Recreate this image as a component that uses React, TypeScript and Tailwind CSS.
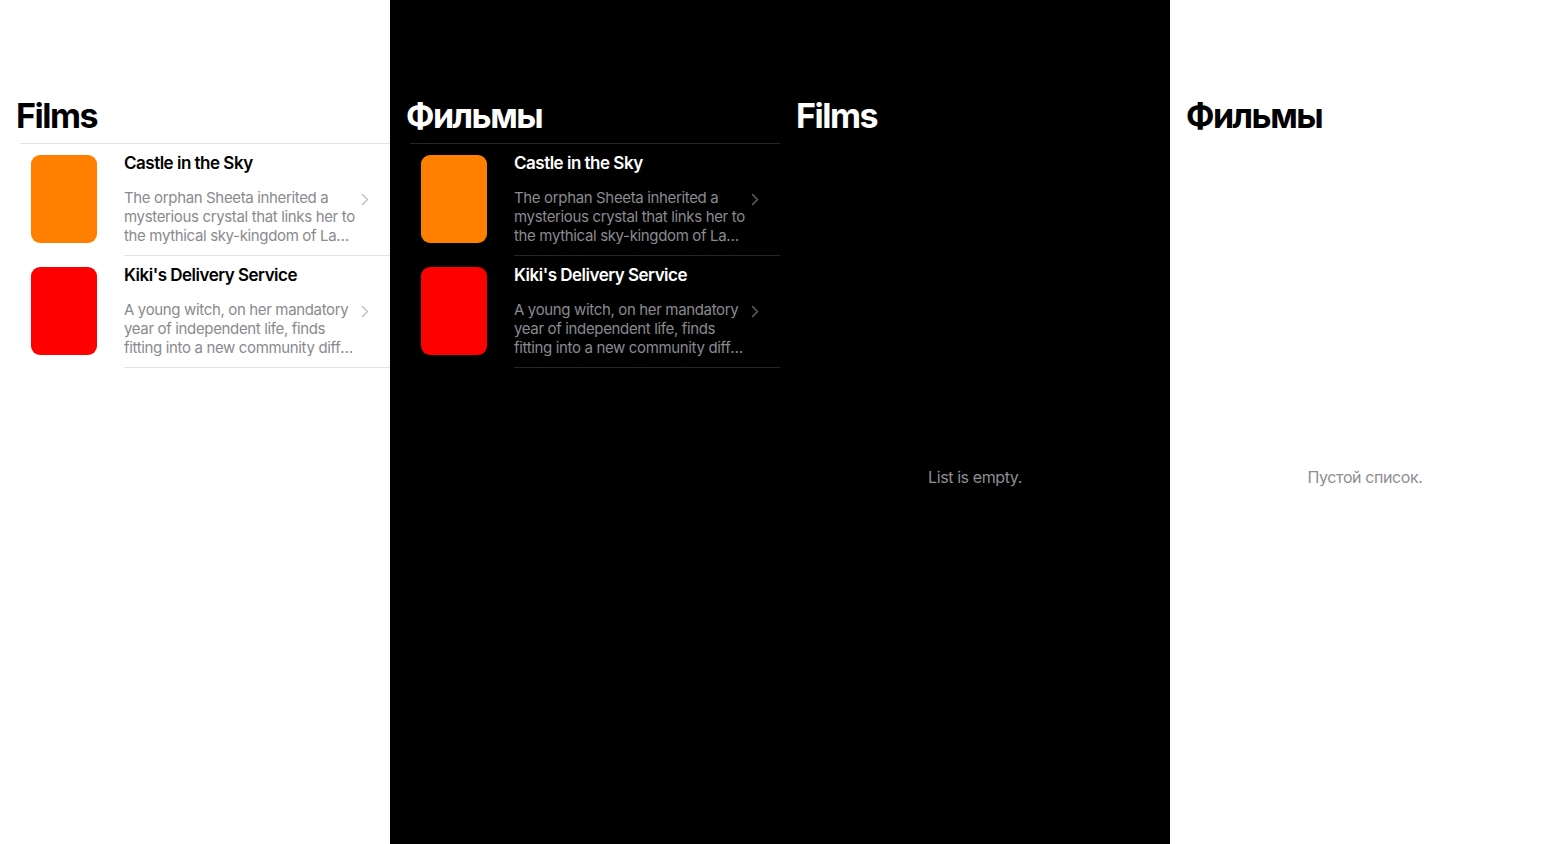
import React from "react";

type Film = { id: string; title: string; lines: string[]; color: string };

// Description split the way the list wraps it; the last line is cut with an ellipsis.
const films: Film[] = [
  {
    id: "castle",
    title: "Castle in the Sky",
    lines: [
      "The orphan Sheeta inherited a",
      "mysterious crystal that links her to",
      "the mythical sky-kingdom of Laputa. With the help of resourceful Pazu and a rollicking band of sky pirates, she makes her way to the ruins of the once-great civilization.",
    ],
    color: "bg-[#ff8000]",
  },
  {
    id: "kiki",
    title: "Kiki's Delivery Service",
    lines: [
      "A young witch, on her mandatory",
      "year of independent life, finds",
      "fitting into a new community difficult while she supports herself by running an air courier service.",
    ],
    color: "bg-[#ff0000]",
  },
];

function Chevron({ dark }: { dark: boolean }) {
  return (
    <svg width="8" height="13" viewBox="0 0 8 13" fill="none" aria-hidden className="shrink-0">
      <path
        d="M1.5 1.5 6.5 6.5 1.5 11.5"
        stroke={dark ? "#5b5b5f" : "#c4c4c7"}
        strokeWidth="1.6"
        strokeLinecap="round"
        strokeLinejoin="round"
      />
    </svg>
  );
}

function FilmRow({ film, dark }: { film: Film; dark: boolean }) {
  return (
    <div className="flex pl-[31px]">
      <div className="pt-[11px] pb-3">
        <div className={`w-[66px] h-[88px] rounded-[9px] ${film.color}`} />
      </div>
      <div
        className={`flex-1 min-w-0 ml-[27px] flex items-center gap-[6px] pt-[11px] pb-3 pr-[21px] border-b ${
          dark ? "border-[#262628]" : "border-[#e3e3e6]"
        }`}
      >
        <div className="flex-1 min-w-0 self-start h-[88px]">
          <div className={`text-[17px] leading-[16px] font-semibold tracking-[-0.5px] ${dark ? "text-white" : "text-black"}`}>
            {film.title}
          </div>
          <div
            className={`mt-[17px] text-[15px] leading-[19px] tracking-[-0.35px] ${
              dark ? "text-[#8a8a8f]" : "text-[#8a8a8e]"
            }`}
          >
            {film.lines.map((l, i) => (
              <div key={i} className={i === film.lines.length - 1 ? "truncate" : "whitespace-nowrap"}>
                {l}
              </div>
            ))}
          </div>
        </div>
        <Chevron dark={dark} />
      </div>
    </div>
  );
}

function Screen({ dark, title, empty, emptyText }: { dark: boolean; title: string; empty: boolean; emptyText: string }) {
  return (
    <div className={`w-[390px] h-[844px] shrink-0 flex flex-col ${dark ? "bg-black" : "bg-white"}`}>
      <h1
        className={`pt-[95px] pb-[7px] px-4 text-[34px] leading-[41px] font-bold tracking-[-1.5px] ${
          dark ? "text-white" : "text-black"
        }`}
      >
        {title}
      </h1>
      {empty ? (
        <div className="flex-1 flex items-center justify-center pb-[34px]">
          <p className="text-[16px] tracking-[-0.4px] text-[#8e8e93]">{emptyText}</p>
        </div>
      ) : (
        <div className={`ml-5 border-t ${dark ? "border-[#262628]" : "border-[#e3e3e6]"}`}>
          <div className="-ml-5">
            {films.map(f => (
              <FilmRow key={f.id} film={f} dark={dark} />
            ))}
          </div>
        </div>
      )}
    </div>
  );
}

export default function App() {
  return (
    <div className="flex w-[1560px] h-[844px] overflow-hidden" style={{ fontFamily: "Inter, 'Noto Sans', sans-serif" }}>
      <Screen dark={false} title="Films" empty={false} emptyText="List is empty." />
      <Screen dark title="Фильмы" empty={false} emptyText="Пустой список." />
      <Screen dark title="Films" empty emptyText="List is empty." />
      <Screen dark={false} title="Фильмы" empty emptyText="Пустой список." />
    </div>
  );
}
